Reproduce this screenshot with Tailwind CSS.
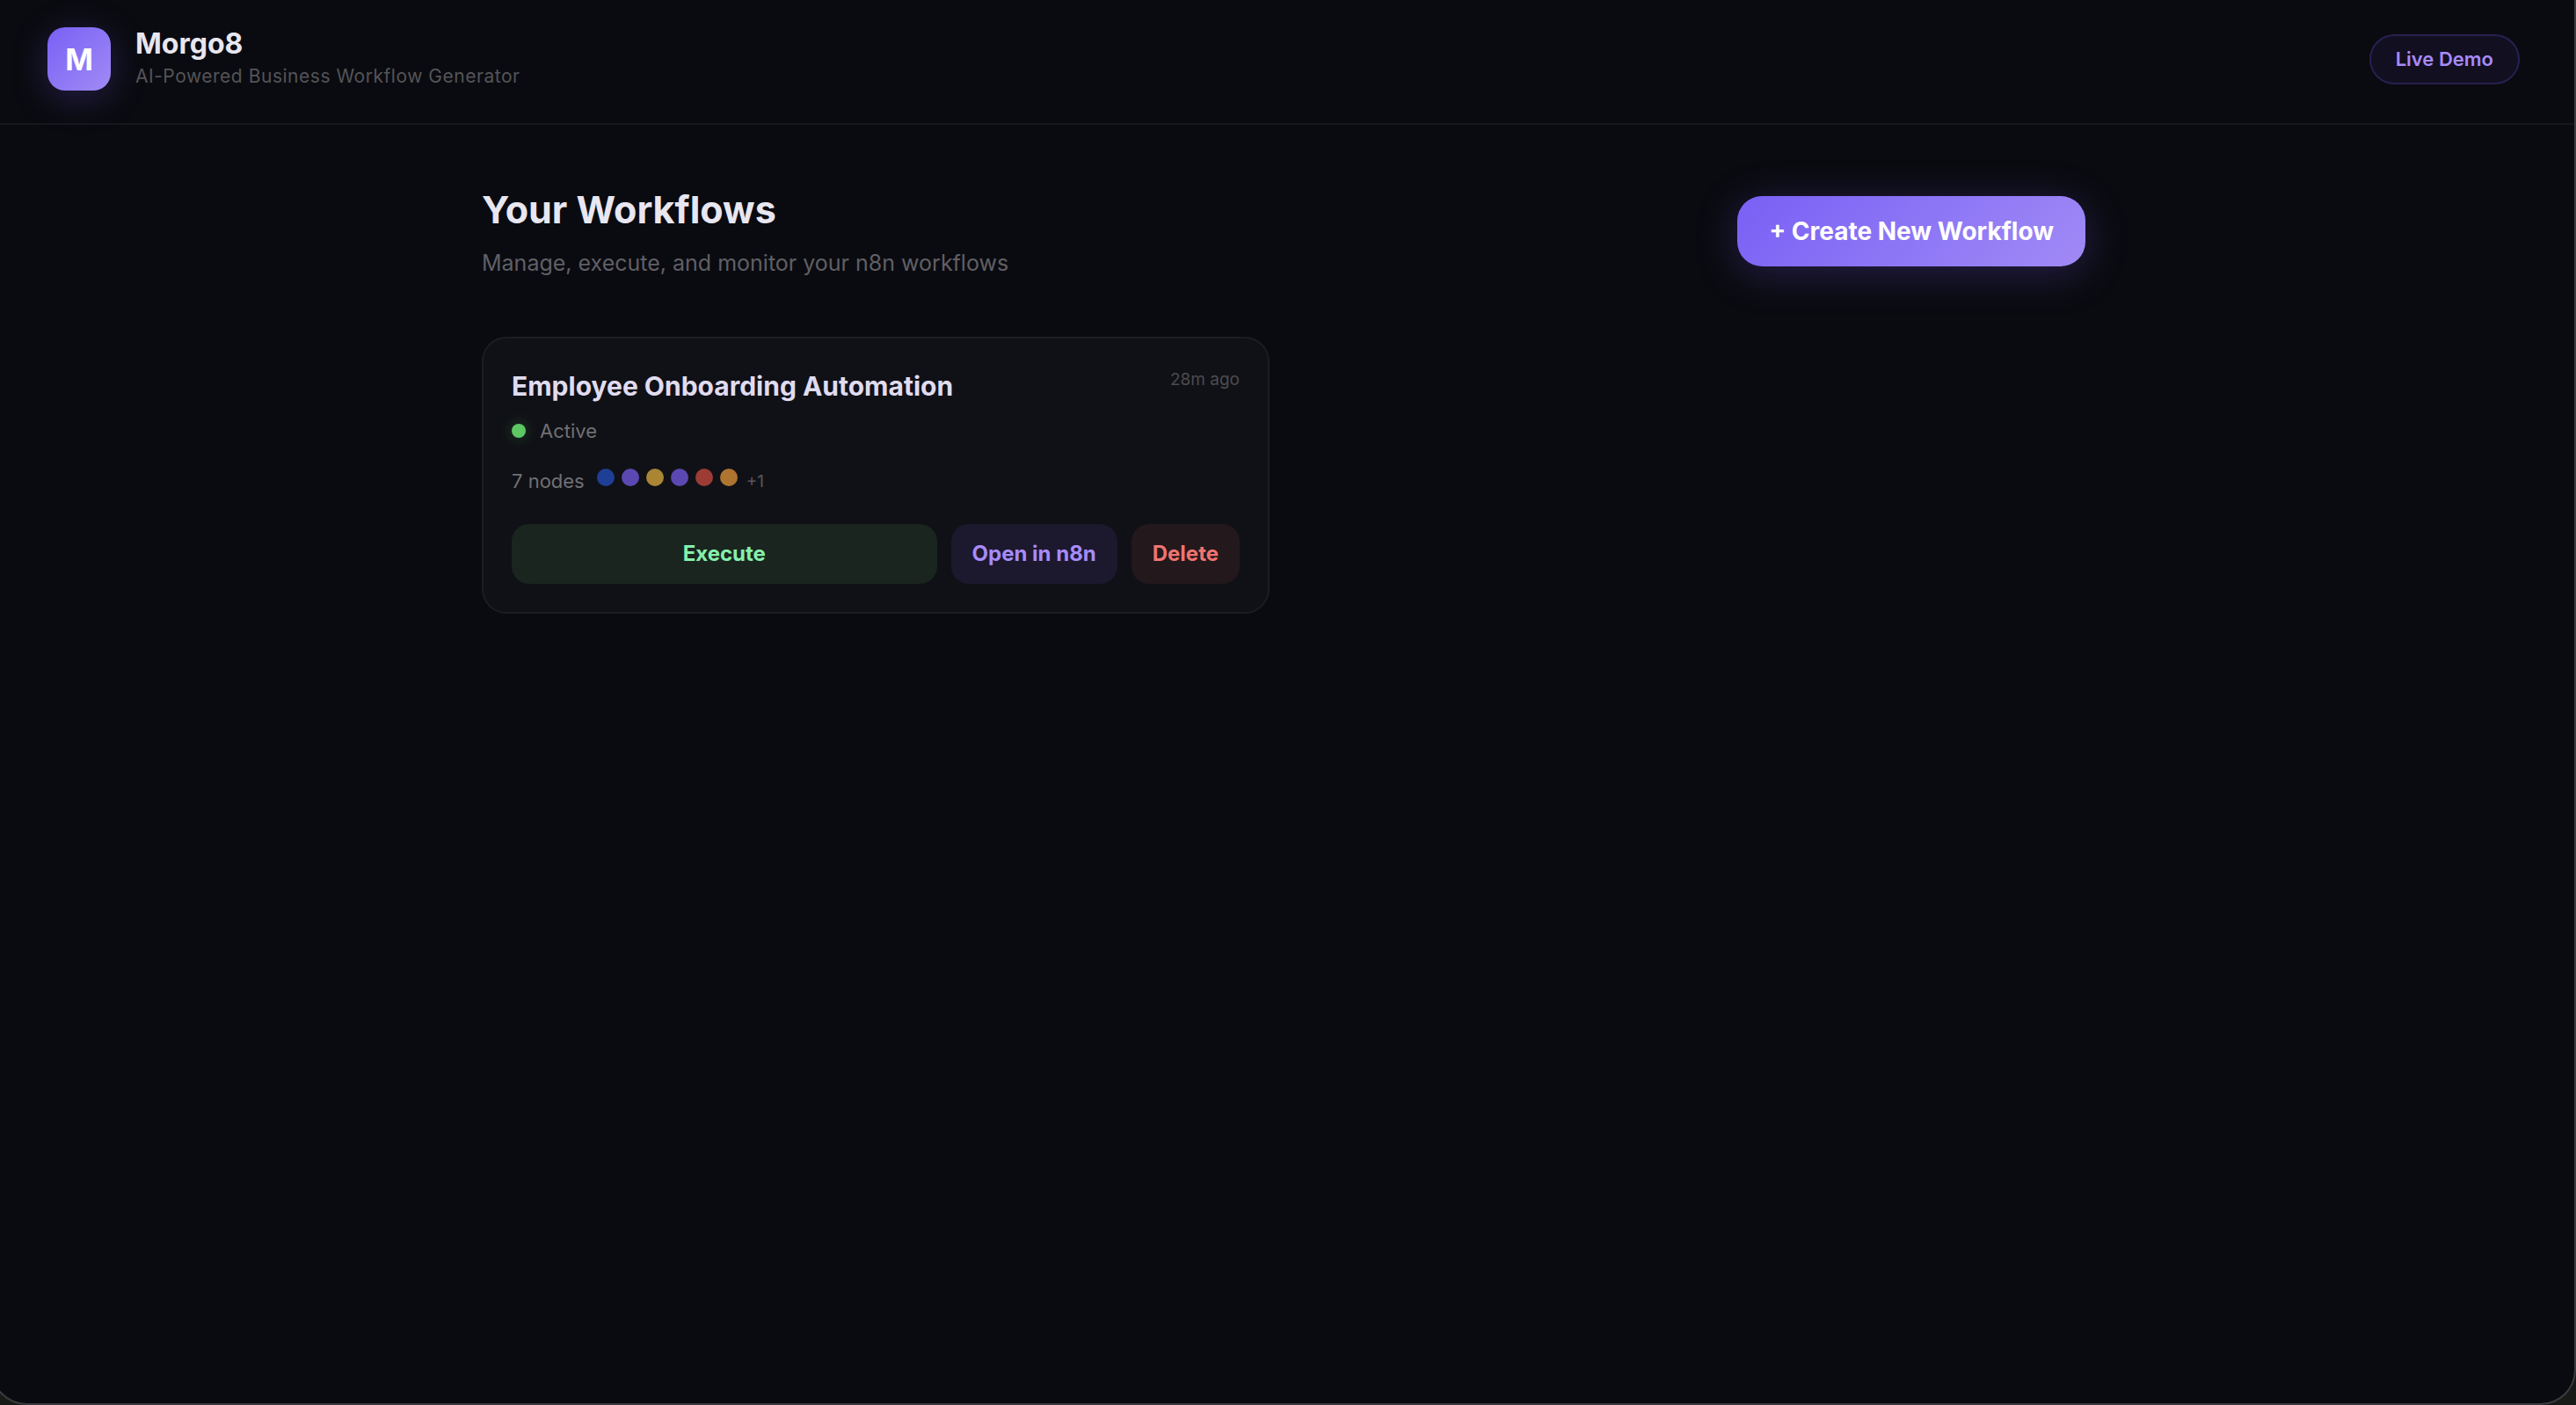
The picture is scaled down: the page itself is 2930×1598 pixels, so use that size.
<!DOCTYPE html>
<html lang="en">
<head>
    <meta charset="UTF-8">
    <meta name="viewport" content="width=device-width, initial-scale=1.0">
    <title>Morgo8 - AI-Powered Business Workflow Generator</title>
    <script src="https://cdn.jsdelivr.net/npm/@tailwindcss/browser@4"></script>
</head>
<body class="bg-[#171a17] font-['Inter',sans-serif] overflow-x-hidden">
    <!-- Window frame -->
    <div class="flex flex-col min-h-screen -ml-[10px] border-x-2 border-b-2 border-[#3b3b40] rounded-b-[40px] bg-[#0a0b10]">

        <header class="flex justify-between items-center px-[62px] pt-[30px] pb-9 border-b-2 border-[#16171c]">
            <div class="flex items-center gap-7">
                <div class="flex items-center justify-center size-[72px] rounded-[20px] bg-linear-135 from-[#7a5ff5] to-[#a18af5] text-white text-[34px] font-bold shadow-[0_8px_40px_rgba(124,92,246,0.25)]">M</div>
                <div>
                    <h1 class="text-[32px] leading-10 font-bold text-[#e8e6f0]">Morgo8</h1>
                    <p class="text-[21px] leading-[34px] tracking-wide text-[#545458]">AI-Powered Business Workflow Generator</p>
                </div>
            </div>
            <a href="#" class="px-7 py-[10px] rounded-full border-2 border-[#282051] bg-[#120f21] text-[22px] leading-[33px] font-semibold text-[#a78bfa]">Live Demo</a>
        </header>

        <main class="w-full max-w-[1824px] mx-auto pt-16">
            <div class="flex justify-between items-center mb-[63px]">
                <div>
                    <h2 class="text-[43px] leading-[64px] font-bold text-[#e8e6f0]">Your Workflows</h2>
                    <p class="mt-2 text-[25px] leading-[42px] text-[#605f65]">Manage, execute, and monitor your n8n workflows</p>
                </div>
                <button type="button" class="h-20 px-9 rounded-[28px] bg-linear-135 from-[#7a5ff5] to-[#a18af5] text-white text-[28px] font-bold shadow-[0_8px_48px_rgba(124,92,246,0.25)] cursor-pointer">+ Create New Workflow</button>
            </div>

            <div class="grid grid-cols-2 gap-8">
                <!-- Workflow card -->
                <article class="p-8 rounded-[28px] border-2 border-[#1c1d21] bg-[#101116]">
                    <div class="flex justify-between items-start">
                        <h3 class="text-3xl leading-11 font-bold text-[#e0dcf0]">Employee Onboarding Automation</h3>
                        <span class="text-[19px] leading-[30px] text-[#4c4c50]">28m ago</span>
                    </div>

                    <div class="flex items-center gap-4 mt-3">
                        <span class="size-4 rounded-full bg-[#5dc763] shadow-[0_0_16px_rgba(93,199,99,0.3)]"></span>
                        <span class="text-[22px] leading-[34px] text-[#707074]">Active</span>
                    </div>

                    <div class="flex items-start gap-[14px] mt-[23px]">
                        <span class="text-[22px] leading-[34px] text-[#707074]">7 nodes</span>
                        <div class="flex items-start gap-2">
                            <div class="flex gap-2 pt-[3px]">
                                <span class="size-5 rounded-full bg-[#1e3f95]"></span>
                                <span class="size-5 rounded-full bg-[#5b48b2]"></span>
                                <span class="size-5 rounded-full bg-[#a98534]"></span>
                                <span class="size-5 rounded-full bg-[#5b48b2]"></span>
                                <span class="size-5 rounded-full bg-[#9c3c34]"></span>
                                <span class="size-5 rounded-full bg-[#ae7430]"></span>
                            </div>
                            <span class="ml-0.5 text-[19px] leading-9 text-[#58585c]">+1</span>
                        </div>
                    </div>

                    <div class="flex gap-4 mt-[30px]">
                        <button type="button" class="flex-1 h-[68px] rounded-[20px] bg-[#1a2520] text-2xl font-bold text-[#86efac] cursor-pointer">Execute</button>
                        <button type="button" class="h-[68px] px-6 rounded-[20px] bg-[#1c182d] text-2xl font-bold text-[#a78bfa] cursor-pointer">Open in n8n</button>
                        <button type="button" class="h-[68px] px-6 rounded-[20px] bg-[#23181c] text-2xl font-bold text-[#f07470] cursor-pointer">Delete</button>
                    </div>
                </article>
            </div>
        </main>
    </div>
</body>
</html>
